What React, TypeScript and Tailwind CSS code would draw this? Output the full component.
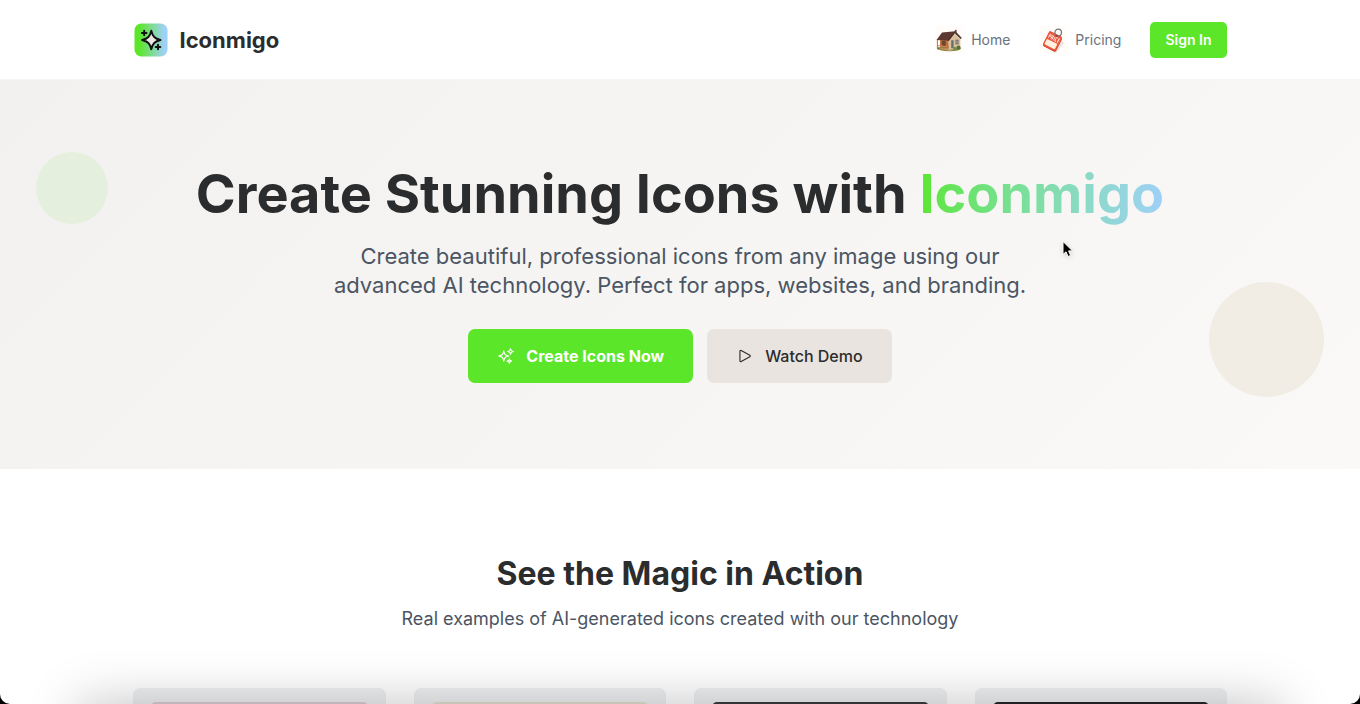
import { HiOutlinePlay, HiOutlineSparkles } from "react-icons/hi2";

function LogoMark() {
  return (
    <svg viewBox="0 0 34 34" className="h-[34px] w-[34px] shrink-0" aria-hidden="true">
      <defs>
        <linearGradient id="logo-fill" x1="0" x2="1" y1="0" y2="0">
          <stop offset="0.15" stopColor="#5ce62a" />
          <stop offset="0.9" stopColor="#9fd0f8" />
        </linearGradient>
      </defs>
      <rect x="0.5" y="0.5" width="33" height="33" rx="7" fill="url(#logo-fill)" />
      <path
        d="M17.3 7.800c1.300 5.600 3.400 7.900 9.200 9.200-5.800 1.300-7.900 3.600-9.200 9.200-1.300-5.600-3.400-7.900-9.200-9.200 5.800-1.300 7.900-3.600 9.200-9.200z"
        fill="#ece7e3"
        stroke="#111"
        strokeWidth="1.900"
        strokeLinejoin="round"
      />
      <path
        d="M10.200 7.700v4.600M7.900 10h4.600M24 21.700v4.600M21.700 24h4.600"
        fill="none"
        stroke="#111"
        strokeWidth="2"
        strokeLinecap="round"
      />
    </svg>
  );
}

function HouseIcon() {
  return (
    <svg viewBox="0 0 28 28" className="h-7 w-7 shrink-0 bg-[#fffcfa]" aria-hidden="true">
      <ellipse cx="14.500" cy="22.600" rx="11.500" ry="2.600" fill="#7c8a3f" />
      <path d="M8 23l6-1.500 6 1.500-5 2.200z" fill="#b9a27c" />
      <path d="M5 13h9v9.500L5 20.500z" fill="#b5703f" />
      <path d="M13 14l6.500-6.800L25.300 13v8.800L14 23.400z" fill="#dcc09b" />
      <path d="M7 6.500L20.300 5.200 13.200 14.700 1.500 14z" fill="#5d3830" />
      <path d="M20 4.800l6.800 7.300-1.100 1-5.900-5.800-6 7.800-1.400-.6z" fill="#46302c" />
      <rect x="20" y="3.800" width="1.600" height="3" fill="#6a4035" />
      <rect x="16.200" y="14.200" width="2.400" height="8" fill="#68706f" />
      <rect x="20.500" y="13.700" width="3" height="4.600" fill="#59636a" />
      <path d="M22 13.700v4.600M20.500 16h3" stroke="#d9c8b2" strokeWidth=".5" />
      <rect x="6.700" y="15" width="4" height="5" fill="#754329" />
      <path d="M2.400 14v8M5.700 14v8.500M11.800 14.500v8.500" stroke="#bd7447" strokeWidth="1" />
      <path d="M2 19.500l9.800 1M2 22l10 1.700" stroke="#d28756" strokeWidth="1.200" />
      <circle cx="23.500" cy="21.400" r="2" fill="#53723a" />
      <circle cx="19.800" cy="22.300" r="1.500" fill="#6f8b45" />
      <circle cx="3.400" cy="22.400" r="1.200" fill="#5f7b3d" />
    </svg>
  );
}

function PriceTagIcon() {
  return (
    <svg viewBox="0 0 28 28" className="h-7 w-7 shrink-0 bg-[#fffcfa]" aria-hidden="true">
      <path d="M14 26.500l3.500 0 7.500-9.500-2-2z" fill="#e9e2de" />
      <g transform="rotate(27 13.500 15)">
        <rect x="6.700" y="7.800" width="14.500" height="16" rx="1.800" fill="#c93f2b" />
        <rect x="6.200" y="7" width="14.500" height="16" rx="1.800" fill="#f0553b" />
        <rect x="7.600" y="15.500" width="11.700" height="6" rx="1" fill="#fff0df" />
        <path
          d="M8.300 10v4M8.300 10h1.300v2H8.300M11 14v-4h1.300v2H11M12.300 12v2M14 10v4M17 10h-1.500v4H17M18.200 14v-4h1.300M18.200 12h1.300M18.200 14h1.300"
          stroke="#fff"
          strokeWidth=".7"
          fill="none"
        />
      </g>
      <circle cx="19.200" cy="6.500" r="3.300" fill="none" stroke="#71777a" strokeWidth="1.200" />
      <circle cx="17.500" cy="10" r="1" fill="#8b3f31" />
    </svg>
  );
}

function Pointer() {
  return (
    <svg
      viewBox="0 0 14 20"
      className="pointer-events-none absolute top-60 left-[1061px] h-5 w-[14px] drop-shadow-sm"
      aria-hidden="true"
    >
      <path
        d="M2 1.500v13l3-2.700 2 4.700 2.600-1.100-2-4.500h4z"
        fill="#000"
        stroke="#fff"
        strokeWidth="1"
        strokeLinejoin="round"
      />
    </svg>
  );
}

const examples = [
  { name: "first", tile: "bg-[#dccfd6]" },
  { name: "second", tile: "bg-[#e3e0d2]" },
  { name: "third", tile: "bg-[#3d3c3c]" },
  { name: "fourth", tile: "bg-[#25252b]" },
];

export default function App() {
  return (
    <div className="h-screen bg-black font-['Inter',sans-serif] text-[#2b2c2d]">
      <div className="relative h-full overflow-hidden rounded-b-[10px] bg-white">
        <header className="border-b border-[#f5f5f4] px-6 pt-[22px] pb-[21px]">
          <div className="mx-auto flex h-9 max-w-[1093px] items-center justify-between">
            <a href="#home" className="flex items-center gap-3">
              <LogoMark />
              <span className="text-[22px] font-bold">Iconmigo</span>
            </a>
            <nav className="flex items-center gap-[29px] text-sm text-[#6b7280]">
              <a href="#home" className="flex items-center gap-2">
                <HouseIcon />
                Home
              </a>
              <a href="#pricing" className="flex items-center gap-2">
                <PriceTagIcon />
                Pricing
              </a>
              <button
                type="button"
                className="h-9 rounded-[5px] bg-[#5ce62a] px-[15px] font-semibold text-white"
              >
                Sign In
              </button>
            </nav>
          </div>
        </header>

        <main>
          <section className="relative bg-linear-135 from-[#f2f1ef] to-[#faf9f7] px-6 pt-[87px] pb-[86px] text-center">
            <div className="absolute top-[72px] left-9 size-[72px] rounded-full bg-[#e4efdd]" />
            <div className="absolute right-9 bottom-[72px] size-[115px] rounded-full bg-[#f1ede5]" />
            <h1 className="relative text-[54px] leading-[54px] font-bold">
              Create Stunning Icons with{" "}
              <span className="bg-linear-to-r from-[#5ce62a] to-[#9fd0f8] bg-clip-text text-transparent">
                Iconmigo
              </span>
            </h1>
            <p className="relative mx-auto mt-[21px] max-w-[710px] text-[22px] leading-[29px] text-[#4b5563]">
              Create beautiful, professional icons from any image using our advanced AI technology.
              Perfect for apps, websites, and branding.
            </p>
            <div className="relative mt-[29px] flex flex-wrap justify-center gap-[14px]">
              <button
                type="button"
                className="flex h-[54px] items-center gap-[11px] rounded-[7px] bg-[#5ce62a] px-[29px] text-base font-bold text-white"
              >
                <HiOutlineSparkles className="size-[18px]" aria-hidden="true" />
                Create Icons Now
              </button>
              <button
                type="button"
                className="flex h-[54px] items-center gap-[11px] rounded-[7px] bg-[#e9e4df] px-[29px] text-base font-medium"
              >
                <HiOutlinePlay className="size-[18px]" aria-hidden="true" />
                Watch Demo
              </button>
            </div>
          </section>

          <section className="px-6 pt-[87px] text-center">
            <h2 className="text-[32px] leading-9 font-bold">See the Magic in Action</h2>
            <p className="mt-[14px] text-[18px] leading-[26px] text-[#4b5563]">
              Real examples of AI-generated icons created with our technology
            </p>
            <ul className="mx-auto mt-14 grid max-w-[1094px] grid-cols-4 gap-7">
              {examples.map((example) => (
                <li
                  key={example.name}
                  className="rounded-[7px] border border-[#eff0f1] bg-[#f0f1f3] px-[17px] py-[13px]"
                >
                  <div className={`aspect-square rounded-[5px] ${example.tile}`} />
                </li>
              ))}
            </ul>
          </section>
        </main>

        <Pointer />
        <div className="pointer-events-none absolute inset-x-20 top-full h-20 shadow-[0_0_52px_rgba(0,0,0,0.25)]" />
      </div>
    </div>
  );
}
